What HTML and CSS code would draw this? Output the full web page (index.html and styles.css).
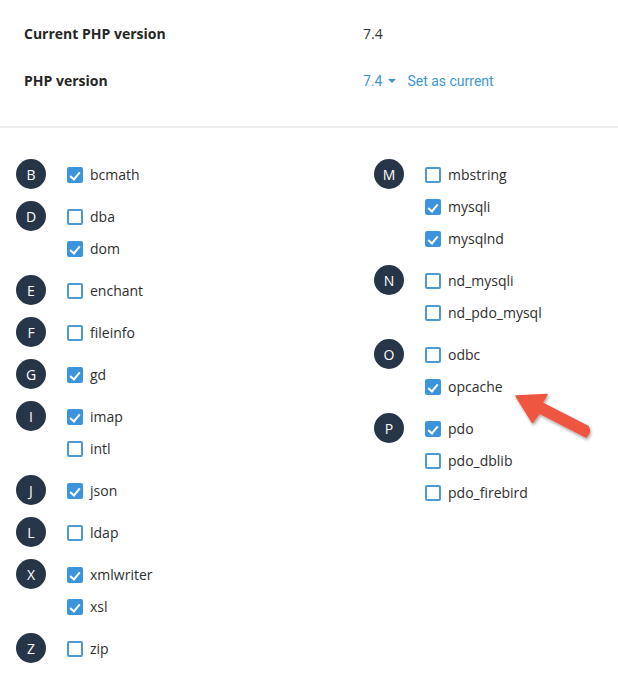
FILE: index.html
```html
<!DOCTYPE html>
<html>
<head>
<meta charset="utf-8">
<link rel="stylesheet" href="styles.css">
</head>
<body>
<div class="page">
  <section class="header">
    <div class="hrow"><div class="hlabel">Current PHP version</div><div class="hval">7.4</div></div>
    <div class="hrow"><div class="hlabel">PHP version</div>
      <div class="hval link"><span>7.4</span><span class="caret"></span><span class="set">Set as current</span></div>
    </div>
  </section>
  <section class="list">
    <div class="col">
      <div class="group"><div class="letter">B</div><div class="items">
        <div class="item"><span class="cb on"></span>bcmath</div></div></div>
      <div class="group"><div class="letter">D</div><div class="items">
        <div class="item"><span class="cb"></span>dba</div>
        <div class="item"><span class="cb on"></span>dom</div></div></div>
      <div class="group"><div class="letter">E</div><div class="items">
        <div class="item"><span class="cb"></span>enchant</div></div></div>
      <div class="group"><div class="letter">F</div><div class="items">
        <div class="item"><span class="cb"></span>fileinfo</div></div></div>
      <div class="group"><div class="letter">G</div><div class="items">
        <div class="item"><span class="cb on"></span>gd</div></div></div>
      <div class="group"><div class="letter">I</div><div class="items">
        <div class="item"><span class="cb on"></span>imap</div>
        <div class="item"><span class="cb"></span>intl</div></div></div>
      <div class="group"><div class="letter">J</div><div class="items">
        <div class="item"><span class="cb on"></span>json</div></div></div>
      <div class="group"><div class="letter">L</div><div class="items">
        <div class="item"><span class="cb"></span>ldap</div></div></div>
      <div class="group"><div class="letter">X</div><div class="items">
        <div class="item"><span class="cb on"></span>xmlwriter</div>
        <div class="item"><span class="cb on"></span>xsl</div></div></div>
      <div class="group"><div class="letter">Z</div><div class="items">
        <div class="item"><span class="cb"></span>zip</div></div></div>
    </div>
    <div class="col">
      <div class="group"><div class="letter">M</div><div class="items">
        <div class="item"><span class="cb"></span>mbstring</div>
        <div class="item"><span class="cb on"></span>mysqli</div>
        <div class="item"><span class="cb on"></span>mysqlnd</div></div></div>
      <div class="group"><div class="letter">N</div><div class="items">
        <div class="item"><span class="cb"></span>nd_mysqli</div>
        <div class="item"><span class="cb"></span>nd_pdo_mysql</div></div></div>
      <div class="group"><div class="letter">O</div><div class="items">
        <div class="item"><span class="cb"></span>odbc</div>
        <div class="item"><span class="cb on"></span>opcache</div></div></div>
      <div class="group"><div class="letter">P</div><div class="items">
        <div class="item"><span class="cb on"></span>pdo</div>
        <div class="item"><span class="cb"></span>pdo_dblib</div>
        <div class="item"><span class="cb"></span>pdo_firebird</div></div></div>
    </div>
  </section>
  <svg class="arrow" width="618" height="684" viewBox="0 0 618 684">
    <defs>
      <filter id="sh" x="-20%" y="-20%" width="140%" height="140%">
        <feDropShadow dx="1" dy="2" stdDeviation="1.5" flood-color="#000" flood-opacity="0.35"/>
      </filter>
    </defs>
    <path filter="url(#sh)" fill="#ef5642" stroke="#ef5642" stroke-width="1.5" stroke-linejoin="round"
      d="M516 396 L547 394.5 L542 403 L588 426.5 Q591.5 432 586 437 L539.5 413 L532.5 422.5 Z"/>
  </svg>
</div>
</body>
</html>
```
FILE: styles.css
```css
html, body { margin: 0; padding: 0; background: #fff; }
.page { position: relative; width: 618px; height: 684px; overflow: hidden; font-family: "Open Sans", "Liberation Sans", sans-serif; font-size: 14px; color: #2b2b2b; }
.header { padding: 10px 24px 22px; border-bottom: 2px solid #ececec; }
.hrow { display: flex; align-items: center; height: 47px; }
.hlabel { width: 339px; font-weight: 700; color: #262626; }
.hval { color: #333; }
.link { display: flex; align-items: center; font-family: Roboto, "Liberation Sans", sans-serif; color: #3d97d3; }
.caret { width: 0; height: 0; border-left: 4px solid transparent; border-right: 4px solid transparent; border-top: 4px solid #3d97d3; margin: 1px 11px 0 6px; }
.list { display: grid; grid-template-columns: 358px 1fr; padding: 31px 0 0 16px; }
.col { display: flex; flex-direction: column; gap: 10px; }
.group { display: flex; }
.letter { width: 30px; height: 30px; border-radius: 50%; background: #263547; color: #fff; display: flex; align-items: center; justify-content: center; font-size: 14px; flex-shrink: 0; margin-right: 21px; }
.items { display: flex; flex-direction: column; }
.item { height: 32px; display: flex; align-items: center; margin-top: -1px; margin-bottom: 1px; color: #2e2e2e; }
.cb { box-sizing: border-box; width: 16px; height: 16px; border: 2px solid #4b9ad3; border-radius: 2px; margin-right: 7px; margin-top: 2px; background: #fff; position: relative; }
.cb.on { background: #3b94dc; border-color: #3b94dc; }
.cb.on::after { content: ""; position: absolute; left: 1px; top: 1px; width: 8px; height: 4px; border-left: 2px solid #fff; border-bottom: 2px solid #fff; transform: translate(0, 2px) rotate(-50deg); }
.arrow { position: absolute; left: 0; top: 0; pointer-events: none; }
```
